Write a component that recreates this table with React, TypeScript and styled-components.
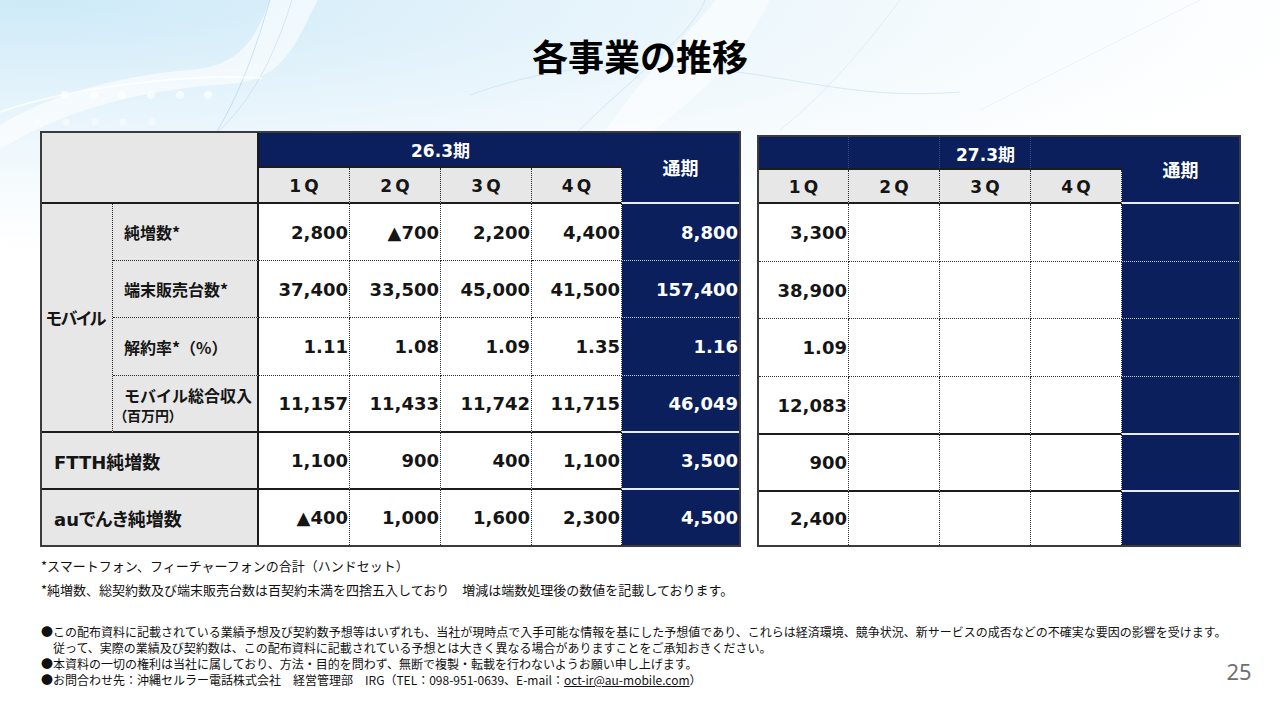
import React from 'react'
import styled, { createGlobalStyle, css } from 'styled-components'

const NAVY = '#0b1f5c'
const GRAY = '#e7e7e7'
const INK = '#151515'

const GlobalStyle = createGlobalStyle`
  html, body {
    margin: 0;
    padding: 0;
    background: #ffffff;
  }
  body {
    font-family: "Noto Sans CJK JP", "Noto Sans", sans-serif;
    color: ${INK};
  }
  * {
    box-sizing: border-box;
  }
`

type Edge = 'none' | 'dot' | 'solid' | 'navydot' | 'wdot' | 'wsolid'

const edge = (e: Edge = 'none'): string => {
  switch (e) {
    case 'dot':
      return '1px dotted #2a2a2a'
    case 'solid':
      return '2px solid #1c1c1c'
    case 'navydot':
      return '1px dotted #3a4d82'
    case 'wdot':
      return '1px dotted #c4cde6'
    case 'wsolid':
      return '2px solid #e8ecf6'
    default:
      return 'none'
  }
}

type CellProps = {
  $area: string
  $r?: Edge
  $b?: Edge
}

const cell = css<CellProps>`
  grid-area: ${({ $area }) => $area};
  border-right: ${({ $r }) => edge($r)};
  border-bottom: ${({ $b }) => edge($b)};
  display: flex;
  align-items: center;
  min-width: 0;
`

/* ---------- page ---------- */

const Page = styled.div`
  position: relative;
  width: 1280px;
  height: 720px;
  overflow: hidden;
  background: #ffffff;
`

const Backdrop = styled.svg`
  position: absolute;
  inset: 0;
  z-index: 0;
`

const Content = styled.main`
  position: relative;
  z-index: 1;
  display: flex;
  flex-direction: column;
`

const Title = styled.h1`
  margin: 0;
  padding-top: 33px;
  text-align: center;
  font-size: 36px;
  line-height: 44px;
  font-weight: 700;
  color: #000;
`

const TablesRow = styled.section`
  display: flex;
  align-items: flex-start;
  gap: 16px;
  margin-top: 54px;
  padding-left: 40px;
`

const Grid = styled.div<{ $cols: string; $rows: string; $w: number; $h: number; $top?: number }>`
  display: grid;
  grid-template-columns: ${({ $cols }) => $cols};
  grid-template-rows: ${({ $rows }) => $rows};
  width: ${({ $w }) => $w}px;
  height: ${({ $h }) => $h}px;
  margin-top: ${({ $top = 0 }) => $top}px;
  border: 2px solid #3b3b3b;
  background: #ffffff;
`

/* ---------- header cells ---------- */

const CornerCell = styled.div<CellProps>`
  ${cell};
  background: ${GRAY};
`

const NavyFill = styled.div<CellProps>`
  ${cell};
  background: ${NAVY};
`

const PeriodCell = styled.div<CellProps & { $fill?: boolean }>`
  ${cell};
  justify-content: center;
  background: ${({ $fill = true }) => ($fill ? NAVY : 'transparent')};
  color: #ffffff;
  font-family: "DejaVu Sans", "Noto Sans CJK JP", sans-serif;
  font-weight: 700;
  font-size: 17px;
  z-index: 1;
`

const FullYearHead = styled.div<CellProps>`
  ${cell};
  justify-content: center;
  background: ${NAVY};
  color: #ffffff;
  font-weight: 700;
  font-size: 18px;
  padding-bottom: 2px;
`

const QuarterHead = styled.div<CellProps>`
  ${cell};
  justify-content: center;
  background: ${GRAY};
  font-family: "DejaVu Sans", sans-serif;
  font-weight: 700;
  font-size: 17px;
  letter-spacing: 3px;
  padding-left: 3px;
  padding-top: 2px;
`

/* ---------- body cells ---------- */

const GroupLabel = styled.div<CellProps>`
  ${cell};
  background: ${GRAY};
  padding-left: 4px;
  font-weight: 700;
  font-size: 17px;
  letter-spacing: -1.5px;
  font-feature-settings: "palt";
  white-space: nowrap;
`

const SubLabel = styled.div<CellProps>`
  ${cell};
  flex-direction: column;
  align-items: flex-start;
  justify-content: center;
  background: ${GRAY};
  padding-left: 11px;
  font-weight: 700;
  font-size: 16px;
  line-height: 22px;
  white-space: nowrap;
`

const SubNote = styled.span`
  font-size: 14px;
  line-height: 18px;
  margin-left: -4px;
  font-feature-settings: "palt";
`

const RowLabel = styled.div<CellProps>`
  ${cell};
  background: ${GRAY};
  padding-left: 12px;
  font-family: "DejaVu Sans", "Noto Sans CJK JP", sans-serif;
  font-weight: 700;
  font-size: 18px;
  font-feature-settings: "palt";
  white-space: nowrap;
`

const NumCell = styled.div<CellProps>`
  ${cell};
  justify-content: flex-end;
  background: #ffffff;
  padding-right: 1px;
  font-family: "DejaVu Sans", sans-serif;
  font-weight: 700;
  font-size: 18px;
  color: ${INK};
  white-space: nowrap;
`

const TotalCell = styled(NumCell)`
  background: ${NAVY};
  color: #ffffff;
`

/* ---------- notes ---------- */

const Footnotes = styled.div`
  margin-top: 7px;
  padding-left: 41px;
  font-size: 13px;
  line-height: 24px;
  color: #111;
`

const BottomRow = styled.footer`
  display: flex;
  align-items: flex-end;
  margin-top: 22px;
  padding-left: 41px;
  padding-right: 36px;
`

const Notes = styled.div`
  font-size: 12px;
  line-height: 16px;
  color: #111;
  white-space: nowrap;
`

const Indent = styled.div`
  padding-left: 12px;
`

const Mail = styled.span`
  text-decoration: underline;
`

const PageNo = styled.div`
  margin-left: auto;
  margin-bottom: 4px;
  font-family: "Noto Sans", sans-serif;
  font-size: 22px;
  line-height: 26px;
  color: #6f6f6f;
`

/* ---------- data ---------- */

type Row = { label: string; sub?: string; q: string[]; total: string }

const mobileRows: Row[] = [
  { label: '純増数*', q: ['2,800', '▲700', '2,200', '4,400'], total: '8,800' },
  { label: '端末販売台数*', q: ['37,400', '33,500', '45,000', '41,500'], total: '157,400' },
  { label: '解約率*（%）', q: ['1.11', '1.08', '1.09', '1.35'], total: '1.16' },
  { label: 'モバイル総合収入', sub: '（百万円）', q: ['11,157', '11,433', '11,742', '11,715'], total: '46,049' },
]

const otherRows: Row[] = [
  { label: 'FTTH純増数', q: ['1,100', '900', '400', '1,100'], total: '3,500' },
  { label: 'auでんき純増数', q: ['▲400', '1,000', '1,600', '2,300'], total: '4,500' },
]

const nextYear = ['3,300', '38,900', '1.09', '12,083', '900', '2,400']

const rowEdge: Edge[] = ['dot', 'dot', 'dot', 'solid', 'solid', 'none']
const totalEdge: Edge[] = ['wdot', 'wdot', 'wdot', 'wsolid', 'wsolid', 'none']
const quarters = ['1Q', '2Q', '3Q', '4Q']

const area = (r: number, c: number, r2 = r + 1, c2 = c + 1) => `${r} / ${c} / ${r2} / ${c2}`

const Background = () => (
  <Backdrop width="1280" height="720" viewBox="0 0 1280 720">
    <defs>
      <radialGradient
        id="sky"
        cx="0"
        cy="0"
        r="1"
        gradientUnits="userSpaceOnUse"
        gradientTransform="translate(40 0) scale(1300 250)"
      >
        <stop offset="0" stopColor="#cdeaf8" />
        <stop offset="0.35" stopColor="#e2f2fb" />
        <stop offset="0.7" stopColor="#f4fafd" />
        <stop offset="1" stopColor="#ffffff" />
      </radialGradient>
    </defs>
    <rect width="1280" height="720" fill="#ffffff" />
    <rect width="1280" height="260" fill="url(#sky)" />
    <path
      d="M0 150 C 60 110 150 88 230 84 C 290 80 300 30 318 0 L 270 0 C 255 40 240 66 190 70 C 110 76 40 100 0 125 Z"
      fill="#ffffff"
      opacity="0.6"
    />
    <path d="M205 150 C 240 100 258 40 270 0" stroke="#9fc4e3" strokeWidth="0.8" fill="none" opacity="0.6" />
    <path d="M292 0 C 276 50 250 120 180 160" stroke="#a7cae6" strokeWidth="0.8" fill="none" opacity="0.5" />
    <path d="M0 112 C 80 84 200 74 262 78" stroke="#ffffff" strokeWidth="2" fill="none" opacity="0.7" />
    <path
      d="M600 140 C 640 75 690 35 715 0 L 770 0 C 745 55 690 105 640 140 Z"
      fill="#ffffff"
      opacity="0.55"
    />
    <path d="M560 150 C 620 85 690 40 705 0" stroke="#b3d3ea" strokeWidth="0.8" fill="none" opacity="0.6" />
    <path d="M470 95 C 560 62 640 62 720 70 C 800 78 860 100 960 92" stroke="#c5deef" strokeWidth="1" fill="none" opacity="0.6" />
    <path d="M780 130 C 830 90 870 40 900 0" stroke="#c0dbee" strokeWidth="0.8" fill="none" opacity="0.5" />
    <path d="M980 110 C 1060 70 1140 30 1200 0" stroke="#d6e9f5" strokeWidth="1" fill="none" opacity="0.5" />
    {[65, 94, 122, 151, 180, 208].map((x) => (
      <circle key={x} cx={x} cy={95} r={4} fill="#ffffff" opacity={0.65} />
    ))}
    {[38, 66, 95, 123, 152].map((x) => (
      <circle key={x} cx={x} cy={122} r={3.5} fill="#ffffff" opacity={0.45} />
    ))}
  </Backdrop>
)

const CurrentYear = () => (
  <Grid $cols="71px 146px 91px 91px 91px 90px 1fr" $rows="35px 36px 57px 57px 58px 57px 57px 1fr" $w={701} $h={416}>
    <CornerCell $area={area(1, 1, 3, 3)} $r="solid" $b="solid" />
    <PeriodCell $area={area(1, 3, 2, 7)} $b="solid">
      26.3期
    </PeriodCell>
    <FullYearHead $area={area(1, 7, 3, 8)} $b="wsolid">
      通期
    </FullYearHead>
    {quarters.map((q, j) => (
      <QuarterHead key={q} $area={area(2, j + 3)} $r="dot" $b="solid">
        {q}
      </QuarterHead>
    ))}

    <GroupLabel $area={area(3, 1, 7, 2)} $r="dot" $b="solid">
      モバイル
    </GroupLabel>
    {mobileRows.map((row, i) => (
      <SubLabel key={row.label} $area={area(i + 3, 2)} $r="solid" $b={rowEdge[i]}>
        <span>{row.label}</span>
        {row.sub && <SubNote>{row.sub}</SubNote>}
      </SubLabel>
    ))}
    {otherRows.map((row, k) => (
      <RowLabel key={row.label} $area={area(k + 7, 1, k + 8, 3)} $r="solid" $b={rowEdge[k + 4]}>
        {row.label}
      </RowLabel>
    ))}

    {[...mobileRows, ...otherRows].map((row, i) => (
      <React.Fragment key={row.label}>
        {row.q.map((v, j) => (
          <NumCell key={j} $area={area(i + 3, j + 3)} $r="dot" $b={rowEdge[i]}>
            {v}
          </NumCell>
        ))}
        <TotalCell $area={area(i + 3, 7)} $b={totalEdge[i]}>
          {row.total}
        </TotalCell>
      </React.Fragment>
    ))}
  </Grid>
)

const NextYear = () => (
  <Grid $cols="90px 91px 91px 91px 1fr" $rows="33px 34px 58px 57px 58px 58px 57px 1fr" $w={484} $h={412} $top={4}>
    {[1, 2, 3, 4].map((c) => (
      <NavyFill key={c} $area={area(1, c)} $r={c < 4 ? 'navydot' : 'none'} $b="solid" />
    ))}
    <PeriodCell $area={area(1, 2, 2, 5)} $fill={false}>
      27.3期
    </PeriodCell>
    <FullYearHead $area={area(1, 5, 3, 6)} $b="wsolid">
      通期
    </FullYearHead>
    {quarters.map((q, j) => (
      <QuarterHead key={q} $area={area(2, j + 1)} $r="dot" $b="solid">
        {q}
      </QuarterHead>
    ))}
    {nextYear.map((v, i) => (
      <React.Fragment key={i}>
        <NumCell $area={area(i + 3, 1)} $r="dot" $b={rowEdge[i]}>
          {v}
        </NumCell>
        {[2, 3, 4].map((c) => (
          <NumCell key={c} $area={area(i + 3, c)} $r="dot" $b={rowEdge[i]} />
        ))}
        <TotalCell $area={area(i + 3, 5)} $b={totalEdge[i]} />
      </React.Fragment>
    ))}
  </Grid>
)

const App = () => (
  <Page>
    <GlobalStyle />
    <Background />
    <Content>
      <Title>各事業の推移</Title>
      <TablesRow>
        <CurrentYear />
        <NextYear />
      </TablesRow>
      <Footnotes>
        <div>*スマートフォン、フィーチャーフォンの合計（ハンドセット）</div>
        <div>*純増数、総契約数及び端末販売台数は百契約未満を四捨五入しており　増減は端数処理後の数値を記載しております。</div>
      </Footnotes>
      <BottomRow>
        <Notes>
          <div>
            ●この配布資料に記載されている業績予想及び契約数予想等はいずれも、当社が現時点で入手可能な情報を基にした予想値であり、これらは経済環境、競争状況、新サービスの成否などの不確実な要因の影響を受けます。
          </div>
          <Indent>従って、実際の業績及び契約数は、この配布資料に記載されている予想とは大きく異なる場合がありますことをご承知おきください。</Indent>
          <div>●本資料の一切の権利は当社に属しており、方法・目的を問わず、無断で複製・転載を行わないようお願い申し上げます。</div>
          <div>
            ●お問合わせ先：沖縄セルラー電話株式会社　経営管理部　IRG（TEL：098-951-0639、E-mail：<Mail>oct-ir@au-mobile.com</Mail>）
          </div>
        </Notes>
        <PageNo>25</PageNo>
      </BottomRow>
    </Content>
  </Page>
)

export default App
